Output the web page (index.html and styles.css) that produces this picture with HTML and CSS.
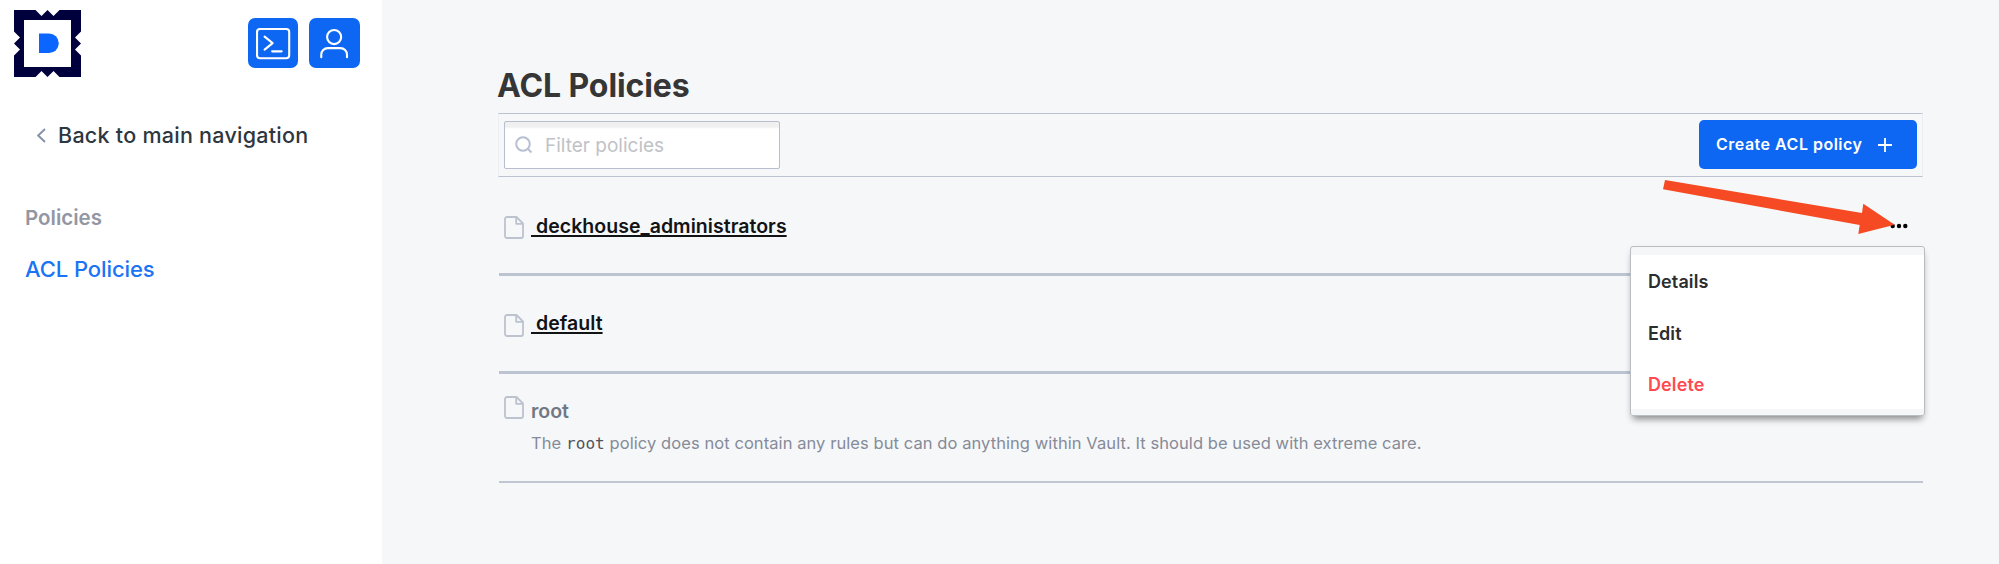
FILE: index.html
```html
<!DOCTYPE html>
<html lang="en">
<head>
<meta charset="utf-8">
<title>ACL Policies</title>
<link rel="stylesheet" href="styles.css">
</head>
<body>
<div class="app">
  <aside class="sidebar">
    <header class="sidebar-head">
      <svg class="logo" viewBox="0 0 67 67">
        <path fill="#00003c" fill-rule="evenodd" d="M0 0H21.500L27.500 6L33.500 0L39.500 6L45.500 0H67V21.500L61 27.500L67 33.500L61 39.500L67 45.500V67H45.500L39.500 61L33.500 67L27.500 61L21.500 67H0V45.500L6 39.500L0 33.500L6 27.500L0 21.500ZM10 10V57H57V10Z"/>
        <path fill="#0a66ff" d="M25 23.500H35A9.700 9.700 0 0 1 35 43H25Z"/>
      </svg>
      <div class="head-actions">
        <button class="icon-btn" aria-label="Console">
          <svg viewBox="0 0 50 50"><rect x="9" y="11" width="32" height="29" rx="3"/><path d="M16.500 18.500L24.500 25L16.500 31.500M24 33.200H33.500"/></svg>
        </button>
        <button class="icon-btn" aria-label="User">
          <svg viewBox="0 0 50 50"><circle cx="25" cy="19" r="7"/><path d="M12.200 39V36.500A6.500 6.500 0 0 1 18.700 30H31.300A6.500 6.500 0 0 1 37.800 36.500V39"/></svg>
        </button>
      </div>
    </header>
    <a class="back"><svg class="chevron" viewBox="0 0 9 15"><path d="M8 1L1.200 7.500L8 14"/></svg><span class="back-text">Back to main navigation</span></a>
    <nav class="nav">
      <div class="nav-title"><span>Policies</span></div>
      <a class="nav-link"><span>ACL Policies</span></a>
    </nav>
  </aside>
  <main class="main">
    <h1 class="title"><span>ACL Policies</span></h1>
    <div class="toolbar">
      <div class="filter">
        <svg class="search" viewBox="0 0 18 18"><circle cx="8" cy="8" r="6.800"/><path d="M13 13L16.500 16.500"/></svg>
        <span class="filter-text">Filter policies</span>
      </div>
      <button class="create"><span>Create ACL policy</span><svg class="plus" viewBox="0 0 14 14"><path d="M7 0V14M0 7H14"/></svg></button>
    </div>
    <ul class="list">
      <li class="row row-first">
        <svg class="doc" viewBox="0 0 20 23"><path d="M3 1H12.500L19 7.500V20A2 2 0 0 1 17 22H3A2 2 0 0 1 1 20V3A2 2 0 0 1 3 1ZM12.200 1V7.800H19"/></svg>
        <a class="name name-admin">&nbsp;deckhouse_administrators</a>
        <button class="more" aria-label="More"><svg viewBox="0 0 18 6"><circle cx="2.700" cy="3" r="2.200"/><circle cx="9" cy="3" r="2.200"/><circle cx="15.300" cy="3" r="2.200"/></svg></button>
      </li>
      <li class="row row-second">
        <svg class="doc" viewBox="0 0 20 23"><path d="M3 1H12.500L19 7.500V20A2 2 0 0 1 17 22H3A2 2 0 0 1 1 20V3A2 2 0 0 1 3 1ZM12.200 1V7.800H19"/></svg>
        <a class="name name-default">&nbsp;default</a>
      </li>
      <li class="row row-root">
        <svg class="doc" viewBox="0 0 20 23"><path d="M3 1H12.500L19 7.500V20A2 2 0 0 1 17 22H3A2 2 0 0 1 1 20V3A2 2 0 0 1 3 1ZM12.200 1V7.800H19"/></svg>
        <div class="root-body">
          <div class="root-name">root</div>
          <p class="root-text">The <code>root</code> policy does not contain any rules but can do anything within Vault. It should be used with extreme care.</p>
        </div>
      </li>
    </ul>
  </main>
  <div class="menu">
    <a class="menu-item menu-details">Details</a>
    <a class="menu-item menu-edit">Edit</a>
    <a class="menu-item danger">Delete</a>
  </div>
  <svg class="arrow" viewBox="0 0 232 55"><path fill="#f54a23" d="M2 1L0 10.300L196.700 46L195.300 55L231.700 45.700L200.300 24.700L199 34Z"/></svg>
</div>
</body>
</html>
```
FILE: styles.css
```css
* { box-sizing: border-box; }
body { margin: 0; font-family: Inter, "Liberation Sans", sans-serif; background: #f5f7fa; }
button { border: 0; padding: 0; background: none; font-family: inherit; }
svg { display: block; flex: none; }
.app { position: relative; display: flex; width: 1999px; height: 564px; overflow: hidden; background: #f6f7f9; }

.sidebar { width: 382px; flex: none; background: #fff; }
.sidebar-head { display: flex; justify-content: space-between; align-items: flex-start; padding: 10px 22.500px 0 14px; height: 115px; }
.logo { width: 67px; height: 67px; }
.head-actions { display: flex; gap: 11px; padding-top: 8px; }
.icon-btn { width: 50.250px; height: 50px; border-radius: 7px; background: #0d67f2; }
.icon-btn svg { fill: none; stroke: #fff; stroke-width: 2.100; stroke-linecap: round; stroke-linejoin: round; }
.back { display: flex; align-items: center; height: 40px; padding-left: 37px; gap: 12px; color: #2e3640; font-size: 21.500px; font-weight: 500; letter-spacing: .26px; white-space: nowrap; }
.chevron { width: 9px; height: 15px; fill: none; stroke: #8793ab; stroke-width: 2; }
.nav { padding: 47px 25px 0; }
.nav-title { height: 32px; line-height: 32px; font-size: 20.500px; font-weight: 600; color: #9297a3; }
.nav-link { display: block; height: 40px; margin-top: 15px; line-height: 40px; font-size: 22px; font-weight: 500; letter-spacing: -.08px; color: #1b73f5; }

.main { flex: 1; padding: 66px 76px 0 116px; }
.title { margin: 0 0 0 -1px; height: 47px; line-height: 40px; font-size: 32px; font-weight: 700; letter-spacing: -.1px; color: #363636; }
.toolbar { display: flex; justify-content: space-between; align-items: flex-start; width: 1425px; height: 64px; padding: 7px 5px 0; border: 1px solid #eceef2; border-top-color: #bcc2d0; border-bottom-color: #bcc2d0; }
.filter { display: flex; align-items: center; width: 276px; height: 48px; padding-left: 10px; gap: 12px; border: 1px solid #b7bfce; border-radius: 2px; background: linear-gradient(#f0f0f0 0 5px, #fff 7px); color: #c0c2c6; font-size: 19px; }
.search { width: 18px; height: 18px; fill: none; stroke: #b7bfd2; stroke-width: 2; }
.create { display: flex; align-items: center; width: 218.500px; height: 49px; margin-top: -1px; padding-left: 17.500px; gap: 15px; border-radius: 5px; background: #0d67f2; color: #fff; font-size: 16px; font-weight: 600; letter-spacing: .5px; white-space: nowrap; }
.create span { margin-top: -2px; }
.plus { width: 14px; height: 14px; stroke: #fff; stroke-width: 1.800; fill: none; }
.list { margin: 0 0 0 1px; padding: 0; width: 1424px; list-style: none; }
.row { display: flex; align-items: flex-start; padding-left: 5px; border-bottom: 3px solid #bcc3d1; }
.row-first { height: 99px; padding-top: 39px; }
.row-second { height: 98px; padding-top: 38px; }
.row-root { height: 109px; padding-top: 22px; border-bottom: 2px solid #c1c7d2; }
.doc { width: 20px; height: 23px; fill: none; stroke: #bcc2ce; stroke-width: 1.800; stroke-linejoin: round; }
.name { margin: -3px 0 0 7px; line-height: 24px; font-size: 19.500px; font-weight: 600; letter-spacing: .04px; color: #111315; text-decoration: underline; text-decoration-thickness: 1.500px; text-underline-offset: 2px; text-decoration-skip-ink: none; }
.name-admin { margin-top: -2px; }
.more { margin: 7px 15px 0 auto; }
.more svg { width: 18px; height: 6px; }
.root-body { margin-left: 7px; }
.root-name { height: 24px; margin-top: 3px; line-height: 24px; font-size: 19.500px; font-weight: 600; color: #727883; }
.root-text { margin: 8px 0 0; height: 24px; line-height: 24px; font-size: 16.500px; letter-spacing: .075px; color: #858b98; white-space: nowrap; }
.root-text code { font-family: "DejaVu Sans Mono", monospace; font-size: 16px; color: #4f535b; }

.menu { position: absolute; left: 1630px; top: 246px; width: 295px; height: 169.500px; padding: 18px 17px; border: 1px solid #b9bcc1; border-radius: 3px; background: linear-gradient(#f5f6f8 0 8px, #fff 8px 162px, #f5f6f8 162px); box-shadow: 0 6px 7px -3px rgba(0,0,0,.42), 0 2px 7px rgba(0,0,0,.06); }
.menu-item { display: block; height: 51.500px; line-height: 34px; font-size: 18px; font-weight: 600; letter-spacing: .1px; color: #2c2d30; }
.menu-item.danger { color: #ff4a4f; }
.arrow { position: absolute; left: 1662.500px; top: 178.500px; width: 232px; height: 55px; }
```
